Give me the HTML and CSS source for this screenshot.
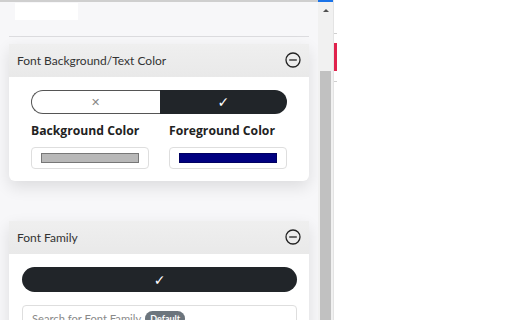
FILE: index.html
```html
<!DOCTYPE html>
<html lang="en">
<head>
  <meta charset="UTF-8" />
  <title>Font Settings</title>
  <link rel="stylesheet" href="styles.css">
</head>
<body>
  <div class="screen">
    <div class="panel">
      <div class="top-section">
        <div class="top-box"></div>
      </div>

      <section class="card">
        <header class="card-head">
          <span>Font Background/Text Color</span>
          <svg class="collapse" width="16" height="16" viewBox="0 0 16 16"><circle cx="8" cy="8" r="7" fill="none" stroke="#222" stroke-width="1.3"/><line x1="4.2" y1="8" x2="11.8" y2="8" stroke="#222" stroke-width="1.3"/></svg>
        </header>
        <div class="card-body colors">
          <div class="toggle">
            <button class="toggle-off">&#x2715;</button>
            <button class="toggle-on">&#x2713;</button>
          </div>
          <div class="color-grid">
            <div class="color-field">
              <label>Background Color</label>
              <div class="swatch-box"><div class="swatch swatch-bg"></div></div>
            </div>
            <div class="color-field">
              <label>Foreground Color</label>
              <div class="swatch-box"><div class="swatch swatch-fg"></div></div>
            </div>
          </div>
        </div>
      </section>

      <section class="card card-family">
        <header class="card-head">
          <span>Font Family</span>
          <svg class="collapse" width="16" height="16" viewBox="0 0 16 16"><circle cx="8" cy="8" r="7" fill="none" stroke="#222" stroke-width="1.3"/><line x1="4.2" y1="8" x2="11.8" y2="8" stroke="#222" stroke-width="1.3"/></svg>
        </header>
        <div class="card-body family">
          <button class="pill-on">&#x2713;</button>
          <div class="search">
            <span class="placeholder">Search for Font Family</span>
            <span class="badge">Default</span>
          </div>
        </div>
      </section>
    </div>

    <div class="scrollbar">
      <div class="arrow"></div>
      <div class="thumb"></div>
    </div>

    <div class="edge">
      <div class="tick"></div>
      <div class="mark"></div>
      <div class="tick tick-low"></div>
    </div>

    <div class="rest"></div>
  </div>
</body>
</html>
```

FILE: styles.css
```css
* {
  box-sizing: border-box;
}
body {
  margin: 0;
  background: #fff;
  font-family: 'Open Sans', 'Noto Sans', sans-serif;
  color: #222;
}
.screen {
  display: flex;
  width: 512px;
  height: 320px;
  overflow: hidden;
}
.panel {
  width: 318px;
  height: 320px;
  background: #f7f7f9;
  border-top: 2px solid #cfcfcf;
  padding: 0 9px;
  overflow: hidden;
  flex-shrink: 0;
}
.top-section {
  height: 35px;
  border-bottom: 1px solid #dcdcdf;
  padding: 1px 0 0 6px;
}
.top-box {
  width: 63px;
  height: 17px;
  background: #fff;
}
.card {
  margin-top: 7px;
  border-radius: 0 0 6px 6px;
  background: #fff;
  box-shadow: 0 6px 16px rgba(0, 0, 0, 0.11);
}
.card-family {
  margin-top: 40px;
}
.card-head {
  height: 33px;
  background: linear-gradient(#efefef, #e9e9e9);
  display: flex;
  align-items: center;
  justify-content: space-between;
  padding: 0 8px 1px 8px;
  font-family: Lato, 'Open Sans', sans-serif;
  font-size: 12px;
  color: #333;
}
.collapse {
  display: block;
}
.card-body.colors {
  padding: 13px 22px 12px;
}
.toggle {
  display: flex;
  height: 24px;
}
.toggle button {
  flex: 1;
  border: none;
  font-family: 'DejaVu Sans', sans-serif;
  padding: 0;
  cursor: pointer;
}
.toggle-off {
  background: #fff;
  border: 1px solid #555 !important;
  border-right: none !important;
  border-radius: 12px 0 0 12px;
  color: #888;
  font-size: 11px;
  font-weight: 300;
}
.toggle-on {
  background: #212529;
  color: #fff;
  border-radius: 0 12px 12px 0;
  font-size: 14px;
}
.color-grid {
  display: grid;
  grid-template-columns: 1fr 1fr;
  gap: 20px;
  margin-top: 9px;
}
.color-field label {
  display: block;
  font-weight: 700;
  font-size: 12.2px;
  color: #222;
  line-height: 16px;
}
.swatch-box {
  margin-top: 8px;
  height: 22px;
  border: 1px solid #dedede;
  border-radius: 4px;
  padding: 5px 9px;
}
.swatch {
  height: 10px;
  border: 1px solid #777;
}
.swatch-bg {
  background: #b8b8b8;
}
.swatch-fg {
  background: #000080;
  border-color: #000060;
}
.card-body.family {
  padding: 13px 12px 0 13px;
  height: 80px;
}
.pill-on {
  display: block;
  width: 100%;
  height: 25px;
  border: none;
  border-radius: 13px;
  background: #212529;
  color: #fff;
  font-size: 14px;
  font-family: 'DejaVu Sans', sans-serif;
}
.search {
  margin-top: 13px;
  height: 30px;
  border: 1px solid #dedede;
  border-radius: 4px;
  padding: 2px 9px 6px;
  display: flex;
  align-items: center;
  gap: 4px;
  font-family: Lato, 'Open Sans', sans-serif;
  font-size: 11.2px;
  color: #8a8a8a;
}
.badge {
  background: #6c757d;
  color: #fff;
  font-size: 9px;
  font-weight: 700;
  padding: 2px 5px;
  border-radius: 8px;
}
.scrollbar {
  width: 15px;
  height: 320px;
  background: #f1f1f1;
  border-top: 2px solid #1a73e8;
  display: flex;
  flex-direction: column;
  align-items: center;
  flex-shrink: 0;
}
.arrow {
  margin-top: 7px;
  width: 0;
  height: 0;
  border-left: 3px solid transparent;
  border-right: 3px solid transparent;
  border-bottom: 3px solid #505050;
}
.thumb {
  margin-top: 59px;
  width: 11px;
  flex: 1;
  background: #c1c1c1;
}
.edge {
  width: 4px;
  height: 320px;
  border-left: 1px solid #e4e4e4;
  flex-shrink: 0;
}
.tick {
  margin-top: 33px;
  height: 1px;
  background: #cfcfcf;
}
.mark {
  margin-top: 9px;
  height: 28px;
  background: #e0224c;
}
.tick-low {
  margin-top: 10px;
}
.rest {
  flex: 1;
  background: #fff;
}
```
